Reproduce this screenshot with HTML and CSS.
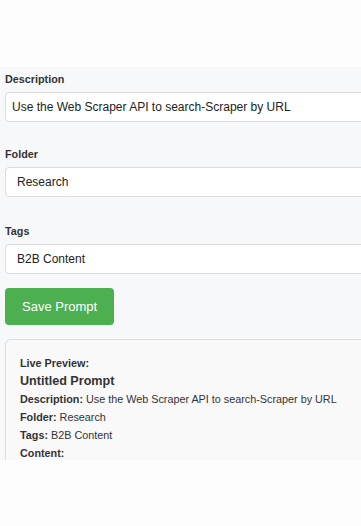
FILE: index.html
```html
<!DOCTYPE html>
<html>
<head>
<meta charset="utf-8">
<link rel="stylesheet" href="styles.css">
</head>
<body>
<div class="top"></div>
<main class="panel">
  <div class="field">
    <label class="label" for="desc">Description</label>
    <input class="input tight" id="desc" type="text" value="Use the Web Scraper API to search-Scraper by URL">
  </div>
  <div class="field mid">
    <label class="label" for="folder">Folder</label>
    <input class="input" id="folder" type="text" value="Research">
  </div>
  <div class="field last">
    <label class="label" for="tags">Tags</label>
    <input class="input" id="tags" type="text" value="B2B Content">
  </div>
  <button class="save" type="button">Save Prompt</button>
  <section class="preview">
    <div class="pv-head">Live Preview:</div>
    <div class="pv-title">Untitled Prompt</div>
    <div class="pv-line"><b>Description:</b> Use the Web Scraper API to search-Scraper by URL</div>
    <div class="pv-line"><b>Folder:</b> Research</div>
    <div class="pv-line"><b>Tags:</b> B2B Content</div>
    <div class="pv-line"><b>Content:</b></div>
    <div class="pv-line">&nbsp;</div>
  </section>
</main>
</body>
</html>
```
FILE: styles.css
```css
html, body {
  margin: 0;
  padding: 0;
  background: #fdfdfd;
  overflow: hidden;
  font-family: "Liberation Sans", Arial, sans-serif;
  color: #333;
}
.top {
  height: 67px;
}
.panel {
  height: 393px;
  box-sizing: border-box;
  overflow: hidden;
  background: #f7f8f9;
  padding: 4px 0 0 5px;
  display: flex;
  flex-direction: column;
  align-items: flex-start;
}
.panel > * {
  flex-shrink: 0;
}
.field {
  display: flex;
  flex-direction: column;
  align-items: flex-start;
  margin-bottom: 24px;
}
.field.mid {
  margin-bottom: 26px;
}
.field.last {
  margin-bottom: 14px;
}
.label {
  font-size: 10.8px;
  font-weight: bold;
  line-height: 16px;
  margin-bottom: 5px;
  color: #333;
}
.input {
  box-sizing: border-box;
  width: 400px;
  height: 30px;
  margin: 0;
  padding: 0 11px;
  border: 1px solid #dcdcdc;
  border-radius: 4px;
  background: #fff;
  font-family: "Liberation Sans", Arial, sans-serif;
  font-size: 12px;
  color: #222;
  outline: none;
}
.input.tight {
  padding: 0 6px;
}
.save {
  height: 37px;
  padding: 0 17px;
  margin: 0 0 14px 0;
  border: none;
  border-radius: 4px;
  background: #4caf50;
  color: #fff;
  font-family: "Liberation Sans", Arial, sans-serif;
  font-size: 13px;
}
.preview {
  width: 400px;
  box-sizing: border-box;
  border: 1px solid #dcdcdc;
  border-radius: 6px;
  background: #f9f9f9;
  padding: 14px 14px;
  font-size: 10.8px;
  line-height: 18px;
  color: #333;
}
.pv-head {
  font-weight: bold;
}
.pv-title {
  font-weight: bold;
  font-size: 12.6px;
}
.pv-line b {
  font-weight: bold;
}
```
